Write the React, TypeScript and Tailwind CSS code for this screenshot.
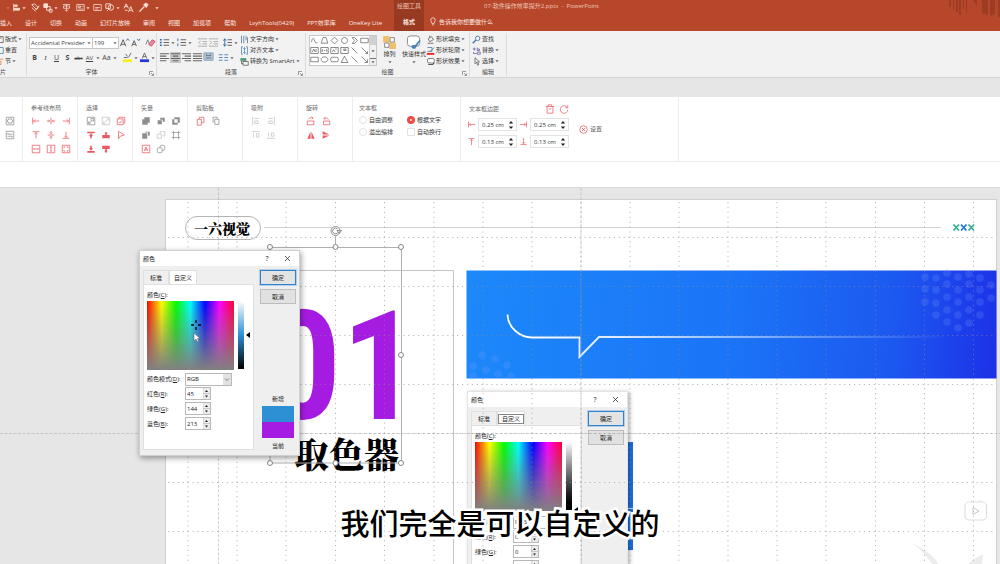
import React from "react";

type Kids = { children?: React.ReactNode };

function Ico({ label, children, size = "w-[11px] h-[11px]", tone = "text-[#666]" }: Kids & { label: string; size?: string; tone?: string }) {
  return (
    <button type="button" aria-label={label} className={`flex shrink-0 items-center justify-center ${size} ${tone}`}>
      <svg viewBox="0 0 12 12" className="h-full w-full" fill="none" stroke="currentColor" strokeWidth="1">
        {children}
      </svg>
    </button>
  );
}

function Caret({ tone = "text-[#666]" }: { tone?: string }) {
  return (
    <svg viewBox="0 0 6 6" className={`h-[6px] w-[6px] shrink-0 ${tone}`} aria-hidden="true">
      <path d="M1.4 2.2h3.2L3 4.2z" fill="currentColor" />
    </svg>
  );
}

function Group({ label, width, launcher, children }: Kids & { label: string; width: string; launcher?: boolean }) {
  return (
    <section className={`relative flex shrink-0 flex-col border-r border-[#dcdcdc] ${width}`}>
      <div className="flex h-[35px] items-center">{children}</div>
      <div className="flex h-[9px] items-center justify-center text-[#444]">{label}</div>
      {launcher && (
        <button type="button" aria-label={`${label}设置`} className="absolute right-[2px] bottom-0 h-[5px] w-[5px]">
          <svg viewBox="0 0 5 5" className="h-full w-full" fill="none" stroke="#777" strokeWidth=".7">
            <path d="M.5 4V.5H4M2 2l2.500 2.500M4.500 2.500v2h-2" />
          </svg>
        </button>
      )}
    </section>
  );
}

function Command({ text, caret = true, children }: Kids & { text: string; caret?: boolean }) {
  return (
    <button type="button" className="flex h-[11px] items-center whitespace-nowrap">
      <svg viewBox="0 0 12 12" className="mr-[1px] h-[9px] w-[9px] shrink-0" fill="none" stroke="#555" strokeWidth="1">
        {children}
      </svg>
      {text}
      {caret && <Caret />}
    </button>
  );
}

function Letter({ label, children, look = "" }: Kids & { label: string; look?: string }) {
  return (
    <button type="button" aria-label={label} className={`flex h-[12px] w-[11px] shrink-0 items-center justify-center text-[7px] text-[#444] ${look}`}>
      {children}
    </button>
  );
}

const tabs = ["插入", "设计", "切换", "动画", "幻灯片放映", "审阅", "视图", "加载项", "帮助", "LvyhTools(0429)", "PPT效率库", "OneKey Lite"];

function Header() {
  return (
    <header className="flex h-[31px] shrink-0 overflow-hidden bg-[#b7472a] text-[#fbe9e3]">
      <div className="flex w-[394px] shrink-0 flex-col">
        <div className="flex h-[15px] items-center text-[#f8ded5]">
          <span className="w-[12px] pl-[5px]"><Caret tone="text-[#cf7b66]" /></span>
          <Ico label="对齐" size="w-[9px] h-[9px]" tone="text-[#f8ded5]"><path d="M2 1v10M3 2.500h4v2H3zM3 7h7v2.500H3z" fill="currentColor" /></Ico>
          <Caret tone="text-[#f8ded5]" />
          <span className="w-[3px]" />
          <Ico label="格式刷" tone="text-[#f8ded5]"><path d="M2 3l3-1 4 4-2 2zM6 9l4-5M2 6l4 4" /></Ico>
          <span className="w-[1px]" />
          <Ico label="排列" tone="text-[#f8ded5]"><path d="M2 2h4v4H2z" fill="currentColor" /><path d="M5 5h4v4H5zM8 8h3v3H8z" /></Ico>
          <Caret tone="text-[#f8ded5]" />
          <span className="w-[3px]" />
          <Ico label="分布" size="w-[9px] h-[9px]" tone="text-[#f8ded5]"><path d="M1 2h10M2 4h8v3H2zM6 2v9M4 9l2 2 2-2" /></Ico>
          <span className="w-[5px]" />
          <Ico label="版式" size="w-[9px] h-[9px]" tone="text-[#f8ded5]"><path d="M1 2h10v8H1zM3 4h3v2H3zM7.500 4.500H10M3 8h7" /></Ico>
          <Caret tone="text-[#f8ded5]" />
          <span className="w-[2px]" />
          <Ico label="文本框" size="w-[9px] h-[9px]" tone="text-[#f8ded5]"><path d="M1 2h10v8H1zM3 6h6M3 8h4" /></Ico>
          <span className="w-[2px]" />
          <Ico label="形状" tone="text-[#f8ded5]"><path d="M2 2h5v5H2z" /><circle cx="7.500" cy="6" r="3" /><path d="M3 10l2-2" /></Ico>
          <Caret tone="text-[#f8ded5]" />
          <span className="w-[2px]" />
          <Ico label="文字" tone="text-[#f8ded5]"><path d="M1 7l2.500-5L6 7M2 5h3M6 11l2.500-6L11 11M7 9h3M2 9h3" /></Ico>
          <span className="w-[4px]" />
          <Ico label="取色器" tone="text-[#f8ded5]"><path d="M1.500 10.500L7 5" strokeWidth="1.500" /><path d="M6 3l3 3 2-3-2-2z" fill="currentColor" /></Ico>
          <span className="w-[5px]" />
          <Caret tone="text-[#f8ded5]" />
        </div>
        <nav className="flex h-[16px] items-center gap-[13px] whitespace-nowrap">
          {tabs.map((t) => <a key={t} href="#tab">{t}</a>)}
        </nav>
      </div>
      <div className="flex w-[30px] shrink-0 flex-col items-center bg-[#983a22]">
        <span className="flex h-[13px] items-center whitespace-nowrap text-[#f0c4b6]">绘图工具</span>
        <a href="#format" className="flex h-[20px] items-center font-bold">格式</a>
      </div>
      <div className="flex flex-1 flex-col">
        <div className="flex h-[13px] items-center pl-[60px] whitespace-pre text-[#efc6ba]">07-软件操作效率提升2.pptx  -  PowerPoint</div>
        <a href="#help" className="flex h-[20px] items-center pl-[5px]">
          <svg viewBox="0 0 10 12" className="mr-[2px] h-[9px] w-[8px]" fill="none" stroke="currentColor">
            <path d="M3.500 8.500C3.500 7 2 6 2 4a3 3 0 0 1 6 0c0 2-1.500 3-1.500 4.500zM3.500 10.500h3" />
          </svg>
          告诉我你想要做什么
        </a>
      </div>
      <svg viewBox="0 0 52 18" className="h-[18px] w-[52px] shrink-0" aria-hidden="true" fill="#9d3b23">
        <path d="M1 0h2v7H1zM5 0h1v10H5zM8 0h2v12H8zM11 0h2v15h-2zM15 0h1v9h-1zM18 0h1v13h-1zM25 0h4v6zM34 0h6v15l-6-2zM42 0h5v14l-5 2zM50 0h2v17h-2z" />
      </svg>
    </header>
  );
}

function Lines({ d }: { d: string }) {
  return <path d={d} strokeWidth="1.100" />;
}

const shapes = [
  "M2 8C3 2 5 2 6 6s3 4 4 2", "M1.500 9.500L4 2h4l2.500 7.500z", "M6 1.500L10.500 6 6 10.500 1.500 6z", "M6 2a4 4 0 1 0 .1 0z", "M3 2h3l4 4-4 4H3l3-4z", "M1 3h10v6H1z",
  "M1 2h10v8H1zM3 8l2-4 2 4M8 4v4", "M1 2h10v8H1zM3 4v4M9 4v4M5 6h2", "M1 2h10v8H1zM3 8l2-3 2 3M7 4h2", "M1 2h10v8H1zM5 4h3v2H5z", "M2 2l8 8", "M2 2l8 8M10 7v3H7",
  "M1 3h10v6H1z", "M6 2.500c6 0 6 7 0 7s-6-7 0-7z", "M3 3h6a2 2 0 0 1 2 2v2a2 2 0 0 1-2 2H3a2 2 0 0 1-2-2V5a2 2 0 0 1 2-2z", "M6 1.500L10.500 10h-9z", "M2 2l8 8", "M2 2l8 8M10 6v4H6",
];

function Ribbon() {
  return (
    <div className="flex h-[47px] shrink-0 overflow-hidden border-b border-[#d5d5d5] bg-[#f2f2f2] pt-[2px] pb-[1px] whitespace-nowrap text-[#333]">
      <section className="flex w-[27px] shrink-0 flex-col border-r border-[#dcdcdc]">
        <div className="-ml-[5px] flex h-[35px] flex-col justify-center">
          <Command text="版式"><path d="M1 2h10v8H1zM3 4h6M3 6h3v3" /></Command>
          <Command text="重置" caret={false}><path d="M2 2h9v8H2zM2 6h4M4 4L2 6l2 2" stroke="#3a78b5" /></Command>
          <Command text="节"><path d="M2 3h9M2 6h6v4H2z" stroke="#e07b39" /></Command>
        </div>
        <div className="flex h-[9px] items-center text-[#444]">片</div>
      </section>

      <Group label="字体" width="w-[130px]" launcher>
        <div className="flex flex-col gap-[3px] pl-[2px]">
          <div className="flex items-center">
            <div className="relative flex">
              <select aria-label="字体" className="h-[12px] w-[64px] appearance-none border border-[#c6c6c6] bg-white pl-[1px] text-[#444]">
                <option>Accidental Presider</option>
              </select>
              <span className="pointer-events-none absolute top-[3px] right-[1px] bg-white"><Caret /></span>
            </div>
            <div className="relative -ml-px flex">
              <select aria-label="字号" className="h-[12px] w-[27px] appearance-none border border-[#c6c6c6] bg-white pl-[1px] text-[#444]">
                <option>199</option>
              </select>
              <span className="pointer-events-none absolute top-[3px] right-[1px] bg-white"><Caret /></span>
            </div>
            <Ico label="增大字号"><path d="M1.500 10L4.500 3l3 7M2.500 8h4" stroke="#555" /><path d="M8 4l1.500-2L11 4" stroke="#2b67a8" /></Ico>
            <Ico label="减小字号"><path d="M2 10l2.500-6L7 10M3 8h3" stroke="#555" /><path d="M8 2l1.500 2L11 2" stroke="#2b67a8" /></Ico>
            <span className="w-[4px]" />
            <Ico label="清除格式" tone="text-[#c9496b]"><path d="M1 8l2-5 2 5" stroke="#777" /><path d="M4 8l4-5 3 2-4 5z" fill="#e58aa3" /></Ico>
          </div>
          <div className="flex items-center">
            <Letter label="加粗" look="font-bold">B</Letter>
            <Letter label="倾斜" look="italic font-serif">I</Letter>
            <Letter label="下划线" look="underline">U</Letter>
            <Letter label="阴影" look="font-bold">S</Letter>
            <Letter label="删除线" look="line-through !text-[5px]">abc</Letter>
            <Letter label="字符间距" look="!text-[6px] underline">AV</Letter>
            <Caret />
            <Letter label="更改大小写">Aa</Letter>
            <Caret />
            <span className="w-[4px]" />
            <Ico label="突出显示"><path d="M2 6h4M7 6l3-5M4 2l2 3" /><path d="M1 9.500h10" stroke="#f7ef1d" strokeWidth="3" /></Ico>
            <Caret />
            <Ico label="字体颜色"><path d="M3.500 7L6 1l2.500 6M4.500 5h3" /><path d="M1 9.500h10" stroke="#2338d6" strokeWidth="3" /></Ico>
            <Caret />
          </div>
        </div>
      </Group>

      <Group label="段落" width="w-[149px]" launcher>
        <div className="flex w-[82px] flex-col gap-[4px] pl-[2px]">
          <div className="flex items-center">
            <Ico label="项目符号"><path d="M1 3h2M1 6h2M1 9h2" stroke="#2b67a8" strokeWidth="1.500" /><Lines d="M5 3h6M5 6h6M5 9h6" /></Ico>
            <Caret />
            <Ico label="编号"><path d="M2 1.500v3M2 7v3" stroke="#2b67a8" /><Lines d="M5 3h6M5 6h6M5 9h6" /></Ico>
            <Caret />
            <span className="w-[5px]" />
            <Ico label="减少缩进" tone="text-[#aaa]"><path d="M1 2h10M6 5h5M6 7.500h5M1 10h10M4 4L2 6l2 2" /></Ico>
            <Ico label="增加缩进" tone="text-[#aaa]"><path d="M1 2h10M6 5h5M6 7.500h5M1 10h10M2 4l2 2-2 2" /></Ico>
            <span className="w-[4px]" />
            <Ico label="行距"><path d="M3 2v8M1.500 4L3 2l1.500 2M1.500 8L3 10l1.500-2" stroke="#2b67a8" /><Lines d="M6 3h5M6 6h5M6 9h5" /></Ico>
            <Caret />
          </div>
          <div className="flex items-center">
            <Ico label="左对齐"><Lines d="M1 2h10M1 4.500h7M1 7h10M1 9.500h7" /></Ico>
            <span className="flex bg-[#c9c9c9]"><Ico label="居中"><Lines d="M1 2h10M3 4.500h6M1 7h10M3 9.500h6" /></Ico></span>
            <Ico label="右对齐"><Lines d="M1 2h10M4 4.500h7M1 7h10M4 9.500h7" /></Ico>
            <Ico label="两端对齐"><Lines d="M1 2h10M1 4.500h10M1 7h10M1 9.500h10" /></Ico>
            <Ico label="分散对齐"><path d="M1 1h10v8H1z" fill="#b5cbe0" stroke="#7f9fbd" /><path d="M3 4h6M3 6.500h6M4 2v1M8 2v1" /></Ico>
            <span className="w-[4px]" />
            <Ico label="分栏"><path d="M1 3h4M1 6h4M1 9h4M7 3h4M7 6h4M7 9h4" stroke="#4b83b8" /></Ico>
            <Caret />
          </div>
        </div>
        <div className="flex flex-col pl-[1px]">
          <Command text="文字方向"><path d="M2 1v10M5 1v10M8 7V1M10 3v8" stroke="#4b6f91" /></Command>
          <Command text="对齐文本"><path d="M4 1H2v10h2M8 1h2v10H8M6 2v8M4.500 4L6 2l1.500 2M4.500 8L6 10l1.500-2" stroke="#4b83b8" /></Command>
          <Command text="转换为 SmartArt"><path d="M1 2h7v3H1z" fill="#4a9b78" stroke="#4a9b78" /><path d="M4 6h7v5H4zM2 5v4h2" /></Command>
        </div>
      </Group>

      <Group label="绘图" width="w-[164px]" launcher>
        <div className="ml-[3px] flex h-[31px] shrink-0 border border-[#c8c8c8] bg-white">
          <div className="grid w-[59px] grid-cols-6 place-items-center">
            {shapes.map((d, i) => <Ico key={i} label={`形状 ${i + 1}`} size="w-[9px] h-[9px]" tone="text-[#666]"><path d={d} /></Ico>)}
          </div>
          <div className="flex w-[7px] flex-col items-center justify-between border-l border-[#d0d0d0] bg-[#f0f0f0] text-[#333]">
            <span className="h-[9px] w-full bg-[#d0d0d0]" /><Caret /><span className="border-t border-[#777]"><Caret /></span>
          </div>
        </div>
        <button type="button" className="flex w-[25px] shrink-0 flex-col items-center">
          <svg viewBox="0 0 14 14" className="h-[15px] w-[15px]"><path d="M1 1h6v6H1zM7 7h6v6H7z" fill="#f0bf6a" /><path d="M7.500 2.500h4v4h-4zM2.500 7.500h4v4h-4z" fill="#fff" stroke="#777" strokeWidth=".8" /></svg>
          <span className="h-[9px]">排列</span><Caret />
        </button>
        <button type="button" className="flex w-[24px] shrink-0 flex-col items-center">
          <svg viewBox="0 0 16 16" className="h-[15px] w-[16px]"><rect x="1" y="1" width="13" height="11" rx="3" fill="#fff" stroke="#888" /><path d="M6 14c-2-2 1-4 3-3l5-6 1 1-5 7c0 2-2 2-4 1z" fill="#4681bd" /></svg>
          <span className="h-[9px]">快速样式</span><Caret />
        </button>
        <div className="flex flex-col">
          <Command text="形状填充"><path d="M3 5l4-3 3 4-5 3zM2 11h8M5 1v3" /></Command>
          <Command text="形状轮廓"><path d="M2 2h6v5H2M5 8l6-6" stroke="#4b6f91" /><path d="M1 10.500h10" stroke="#e22" strokeWidth="2.500" /></Command>
          <Command text="形状效果"><path d="M4 2h5a2 2 0 0 1 2 2v2a2 2 0 0 1-2 2H4a2 2 0 0 1-2-2V4a2 2 0 0 1 2-2z" fill="#fff" /><path d="M3 10h6l2-2.500" strokeWidth="1.500" /></Command>
        </div>
      </Group>

      <Group label="编辑" width="w-[37px]">
        <div className="flex flex-col pl-[2px]">
          <Command text="查找" caret={false}><circle cx="7.500" cy="4.500" r="3" stroke="#2b67a8" /><path d="M5 7l-4 4" stroke="#2b67a8" strokeWidth="1.500" /></Command>
          <Command text="替换"><path d="M1 4h4M3 2v4M7 2v4h3V4H7M2 8v2h4M7 8h4v3H7z" stroke="#6a5a9c" /></Command>
          <Command text="选择"><path d="M4 1v8l2-2 1.500 4L9 10 7.500 6.500H10z" /></Command>
        </div>
      </Group>
    </div>
  );
}

type Glyph = { d: string; tone?: "red" | "gray" | "light"; fill?: boolean };

const guides: Glyph[] = [
  { d: "M2 2v8M3 6h7M5 4L3 6l2 2" }, { d: "M6 2v8M1 6h3M11 6H8M3 4.500L4.500 6 3 7.500M9 4.500L7.500 6 9 7.500" }, { d: "M10 2v8M2 6h7M7 4l2 2-2 2" },
  { d: "M2 2h8M6 3v7M4 5l2-2 2 2" }, { d: "M2 6h8M6 1v3M6 11V8M4.500 3L6 4.500 7.500 3M4.500 9L6 7.500 7.500 9" }, { d: "M2 10h8M6 2v7M4 7l2 2 2-2" },
  { d: "M1.500 1.500h9v9h-9zM3 6h6M4 5L3 6l1 1M8 5l1 1-1 1" }, { d: "M1.500 1.500h9v9h-9zM6 3v6M5 4l1-1 1 1M5 8l1 1 1-1" }, { d: "M1.500 1.500h9v9h-9zM3.500 5V3.500H5M7 3.500h1.500V5M8.500 7v1.500H7M5 8.500H3.500V7" },
];
const selects: Glyph[] = [
  { d: "M1.500 1.500h9v9h-9zM6 3h3v3H6zM3 7h2v2H3z", tone: "gray" }, { d: "M1.500 1.500h9v9h-9zM4 8l4-4M7 3.500h2v2M3 7v2h2", tone: "light" }, { d: "M1.500 3.500h7v7h-7zM3.500 3V1.500h7v7H9M3 7l1.500 1.500L7 5.500" },
  { d: "M1.500 2h9v2h-9zM5 5h2v5H5zM3.500 7L6 4l2.500 3z", fill: true }, { d: "M1.500 6h9v4h-9zM5 3h2v3H5zM4 4l2-2 2 2z", fill: true }, { d: "M3 1.500l7 4.500-5 1.500L3 10.500z" },
  { d: "M1.500 8.500h9v2h-9zM5 2h2v4H5zM3.500 5h5L6 8z", fill: true }, { d: "M1.500 2h9v4h-9zM5 6h2v3H5zM4 8h4l-2 3z", fill: true },
];
const vectors: Glyph[] = [
  { d: "M4 1.500h6.500V8H8v2.500H1.500V4H4z", tone: "gray", fill: true }, { d: "M5 2h5.500v5H8V4.500H5zM2 5h5v5H2z", tone: "gray", fill: true }, { d: "M4 1.500h6.500V8H8V4H4zM1.500 4H4v4h4v2.500H1.500z", tone: "gray", fill: true },
  { d: "M1.500 4h6v6.500h-6zM8.500 2h2v5h-2zM5 2h4v1H5z", tone: "gray", fill: true }, { d: "M1.500 5h5v5h-5zM5 4.500V2h5.500v5H8", tone: "light" }, { d: "M3 1v10M9 1v10M1 3h10M1 9h10", tone: "gray" },
  { d: "M1.500 1.500h9v9h-9zM4 8.500L6 3.500l2 5M4.500 7h3" }, { d: "M6.500 1.500h2a2 2 0 0 1 2 2v2a2 2 0 0 1-2 2h-1M3.500 4.500h2a2 2 0 0 1 2 2v2a2 2 0 0 1-2 2h-2a2 2 0 0 1-2-2v-2a2 2 0 0 1 2-2zM5 4.500V3a1.500 1.500 0 0 1 1.500-1.500", tone: "gray" },
];
const clips: Glyph[] = [{ d: "M1.500 4h5v7h-5zM4 3.500V1.500h5.500V8H7" }, { d: "M4.500 4h5v6h-5zM2.500 8V1.500h5v2", tone: "gray" }];
const snaps: Glyph[] = [
  { d: "M2 1v10M4 3h5M4.500 6h4v3h-4z", tone: "light" }, { d: "M10 1v10M3 3h5M3.500 6h4v3h-4z", tone: "light" },
  { d: "M1 2h10M3 4v5M6.500 4.500h3v4h-3z", tone: "light" }, { d: "M1 10h10M3 3v5M6.500 3.500h3v4h-3z", tone: "light" },
];
const turns: Glyph[] = [
  { d: "M1.500 6h8v4.500h-8zM3 4c1-2 3-2.500 5-1.500M7 .8l1.500 1.700L7 4" }, { d: "M3 6h7.500v4.500H3zM9 4.500C8 2.500 6 2 4 3M5 1L3.500 3 5 4.500" },
  { d: "M5.500 2v8.500h-4zM6.500 2v8.500h4z", fill: true }, { d: "M2 1.500L10 5.500H2zM2 6.500h8L2 10.500z", fill: true },
];

function Tool({ name, g }: { name: string; g: Glyph }) {
  const tone = g.tone === "gray" ? "text-[#8e8e8e]" : g.tone === "light" ? "text-[#c2c2c2]" : "text-[#ea5a61]";
  return (
    <Ico label={name} tone={tone} size="w-[10px] h-[10px]">
      {g.fill ? <path d={g.d} fill="currentColor" stroke="none" /> : <path d={g.d} strokeWidth=".9" />}
    </Ico>
  );
}

function Panel({ title, items, cols = "grid-cols-[repeat(3,10px)]" }: { title: string; items: Glyph[]; cols?: string }) {
  return (
    <section className="w-[55px] shrink-0 border-r border-[#ededed] pt-[7px] pl-[8px]">
      <h2 className="h-[10px] text-[#6b6b6b]">{title}</h2>
      <div className={`mt-[2px] grid gap-x-[5px] gap-y-[4px] ${cols}`}>
        {items.map((g, i) => <Tool key={i} name={`${title} ${i + 1}`} g={g} />)}
      </div>
    </section>
  );
}

function Measure({ label, value, glyph }: { label: string; value: string; glyph: string }) {
  return (
    <label className="flex items-center gap-[2px]">
      <svg viewBox="0 0 12 12" className="h-[9px] w-[9px]" fill="none" stroke="#ea6a70"><path d={glyph} /></svg>
      <span className="flex h-[13px] w-[39px] items-center border border-[#e4e4e4] bg-white">
        <input aria-label={label} defaultValue={value} className="w-[29px] bg-transparent pl-[3px] text-[#333] outline-none" />
        <svg viewBox="0 0 6 10" className="h-[10px] w-[6px]" aria-hidden="true"><path d="M.8 3.500L3 1l2.200 2.500zM.8 6.500L3 9l2.200-2.500z" fill="#222" /></svg>
      </span>
    </label>
  );
}

function Choice({ text, kind, on }: { text: string; kind: "radio" | "checkbox"; on?: boolean }) {
  const shape = kind === "radio" ? "rounded-full" : "rounded-[1px]";
  const state = on ? "border-[3px] border-[#ee4b43]" : "border border-[#e2e2e2]";
  return (
    <label className="flex h-[12px] items-center gap-[2px]">
      <input type={kind} name={kind === "radio" ? "fit" : "wrap"} defaultChecked={on} className={`h-[8px] w-[8px] shrink-0 appearance-none bg-white ${shape} ${state}`} />
      {text}
    </label>
  );
}

function PluginBar() {
  return (
    <div className="mt-[19px] flex h-[91px] shrink-0 flex-col overflow-hidden border-b border-[#d8d8d8] bg-white whitespace-nowrap">
      <div className="flex h-[65px] border-b border-[#ececec]">
        <section className="flex w-[23px] shrink-0 flex-col gap-[4px] border-r border-[#ededed] pt-[19px] pl-[5px]">
          <Tool name="组合" g={{ d: "M1.500 1.500h9v9h-9zM4 3.500h4v1l1 .5v2l-1 .5v1H4v-1l-1-.5V5l1-.5z", tone: "gray" }} />
          <Tool name="交换" g={{ d: "M1.500 1.500h9v9h-9zM3 5h6M4 3.500L3 5M3 7.500h6M9 7.500L8 9", tone: "gray" }} />
        </section>
        <Panel title="参考线布局" items={guides} />
        <Panel title="选择" items={selects} />
        <Panel title="矢量" items={vectors} />
        <Panel title="剪贴板" items={clips} />
        <Panel title="吸附" items={snaps} cols="grid-cols-[repeat(2,10px)]" />
        <Panel title="旋转" items={turns} cols="grid-cols-[repeat(2,10px)]" />
        <section className="w-[108px] shrink-0 border-r border-[#ededed] pt-[7px] pl-[6px] text-[#333]">
          <h2 className="h-[10px] text-[#6b6b6b]">文本框</h2>
          <div className="grid grid-cols-[48px_48px]">
            <Choice kind="radio" text="自由调整" />
            <Choice kind="radio" text="根据文字" on />
            <Choice kind="radio" text="溢出缩排" />
            <Choice kind="checkbox" text="自动换行" />
          </div>
        </section>
        <section className="flex w-[218px] shrink-0 gap-[10px] border-r border-[#ededed] pt-[7px] pl-[6px]">
          <div className="flex flex-col gap-[4px]">
            <div className="flex h-[10px] items-center pl-[2px] text-[#6b6b6b]">
              <h2 className="flex-1">文本框边距</h2>
              <Tool name="删除" g={{ d: "M1 3h10M2.500 3v8h7V3M4 3V1h4v2M4.500 6h3" }} />
              <span className="w-[4px]" />
              <Tool name="重置" g={{ d: "M10 4.500A4.500 4.500 0 1 0 10.500 7M10.500 1.500v3h-3" }} />
            </div>
            <div className="grid grid-cols-[50px_50px] gap-x-[2px] gap-y-[4px]">
              <Measure label="左边距" value="0.25 cm" glyph="M2 2v8M3 6h8M5 4L3 6l2 2" />
              <Measure label="右边距" value="0.25 cm" glyph="M10 2v8M1 6h8M7 4l2 2-2 2" />
              <Measure label="上边距" value="0.13 cm" glyph="M2 2h8M6 3v8M4 5l2-2 2 2" />
              <Measure label="下边距" value="0.13 cm" glyph="M2 10h8M6 1v8M4 7l2 2 2-2" />
            </div>
          </div>
          <button type="button" className="flex h-[50px] items-center gap-[2px] text-[#555]">
            <svg viewBox="0 0 12 12" className="h-[9px] w-[9px]" fill="none" stroke="#ea5a61"><circle cx="6" cy="6" r="5" /><path d="M4 4l4 4M8 4L4 8" /></svg>
            设置
          </button>
        </section>
      </div>
    </div>
  );
}

function Spin({ text, hot, value }: { text: string; hot: string; value: string }) {
  return (
    <label className="flex h-[15px] items-center">
      <span className="w-[38px]">{text}(<u>{hot}</u>):</span>
      <span className="flex h-[13px] w-[26px] border border-[#b9b9b9] bg-white">
        <input defaultValue={value} className="w-[17px] bg-transparent pl-[1px] outline-none" />
        <svg viewBox="0 0 7 11" className="h-[11px] w-[7px] bg-[#ececec]" aria-hidden="true">
          <path d="M0 0v11M0 5.500h7" stroke="#bbb" fill="none" strokeWidth=".7" /><path d="M2 4l1.500-2L5 4zM2 7.500h3L3.500 9.500z" fill="#222" />
        </svg>
      </span>
    </label>
  );
}

type DialogProps = { name: string; place: string; rgb: string[]; lum: string; tabLook: string; arrow: string; picked?: boolean };

function ColorDialog({ name, place, rgb, lum, tabLook, arrow, picked }: DialogProps) {
  return (
    <section role="dialog" aria-label={name} className={`absolute flex h-[206px] w-[161px] flex-col border bg-[#efefef] text-[#222] ${place}`}>
      <div className="flex h-[15px] items-center bg-white pl-[3px]">
        <span className="flex-1">颜色</span>
        <button type="button" aria-label="帮助" className="w-[10px] text-[7px]">?</button>
        <button type="button" aria-label="关闭" className="mr-[8px] ml-[12px] h-[7px] w-[7px]">
          <svg viewBox="0 0 7 7" className="h-full w-full" stroke="#333" strokeWidth=".8"><path d="M1 1l5 5M6 1L1 6" /></svg>
        </button>
      </div>
      <div className="flex flex-1 gap-[6px] pt-[4px] pr-[3px] pb-[5px] pl-[3px]">
        <div className="flex w-[111px] flex-col">
          <div className="flex h-[14px]">
            <button type="button" className="w-[26px] border border-b-0 border-[#e0e0e0]">标准</button>
            <button type="button" className="w-[28px] border border-b-0 border-[#dedede] bg-white p-[1px]"><span className={`block ${tabLook}`}>自定义</span></button>
          </div>
          <div className="flex-1 border border-[#dfdfdf] bg-white pl-[3px] whitespace-nowrap">
            <div className="flex h-[16px] items-center pt-[3px]">颜色(<u>C</u>):</div>
            <div className="flex gap-[4px]">
              <div className="relative h-[69px] w-[87px] bg-[linear-gradient(to_bottom,transparent,#808080),linear-gradient(to_right,#f00,#ff0,#0f0,#0ff,#00f,#f0f,#f03)]">
                {picked && (
                  <svg viewBox="0 0 12 24" className="absolute top-[18px] left-[43px] h-[24px] w-[12px]" aria-hidden="true">
                    <path d="M6 1v3M6 8v3M1 6h3M8 6h3" stroke="#000" strokeWidth="1.300" />
                    <path d="M4 14v8l2-2 1.500 3 1.200-.6L7.500 19.500H10z" fill="#fff" stroke="#555" strokeWidth=".5" />
                  </svg>
                )}
              </div>
              <div className={`h-[68px] w-[6px] ${lum}`} />
              <svg viewBox="0 0 5 6" className={`-ml-[3px] h-[6px] w-[5px] ${arrow}`} aria-hidden="true"><path d="M5 0v6L1 3z" fill="#000" /></svg>
            </div>
            <label className="mt-[2px] flex h-[14px] items-center">
              <span className="w-[38px]">颜色模式(<u>D</u>):</span>
              <span className="relative flex">
                <select className="h-[13px] w-[47px] appearance-none border border-[#b9b9b9] bg-white pl-[1px]"><option>RGB</option></select>
                <svg viewBox="0 0 8 11" className="pointer-events-none absolute top-[1px] right-[1px] h-[11px] w-[8px] bg-[#e2e2e2]" fill="none" stroke="#666" strokeWidth=".8"><path d="M2 4.500l2 2 2-2" /></svg>
              </span>
            </label>
            <Spin text="红色" hot="R" value={rgb[0]} />
            <Spin text="绿色" hot="G" value={rgb[1]} />
            <Spin text="蓝色" hot="B" value={rgb[2]} />
          </div>
        </div>
        <div className="flex flex-1 flex-col items-center">
          <button type="button" className="h-[15px] w-full border border-[#2f83cc] bg-[#e3e3e3] outline outline-[#8bb8e0]/60">确定</button>
          <button type="button" className="mt-[4px] h-[15px] w-full border border-[#bdbdbd] bg-[#e1e1e1]">取消</button>
          {picked && (
            <>
              <span className="mt-auto">新增</span>
              <div className="mt-[3px] h-[16px] w-[32px] bg-[#2d90d5]" />
              <div className="mb-[4px] h-[16px] w-[32px] bg-[#a61be2]" />
              <span>当前</span>
            </>
          )}
        </div>
      </div>
    </section>
  );
}

const gridX = [188, 237, 286, 335.5, 384.500, 434, 483, 532, 581, 630, 679, 728, 777, 826, 875.500, 924.500, 973.500];
const gridY = [237.500, 286.500, 335.500, 384.500, 433.500, 482.500, 531.500];
const handles = [[270, 247], [335.500, 247], [401, 247], [401, 355], [270, 463], [335.500, 463], [401, 463]];
const halftone = [
  [925, 277], [947, 273], [936, 278], [925, 289], [936, 290], [947, 284], [936, 303], [925, 302], [958, 277], [969, 274], [958, 290], [969, 284], [947, 297],
  [958, 302], [969, 297], [980, 278], [980, 290], [980, 302], [947, 310], [936, 315], [969, 310], [958, 315], [980, 315], [991, 285], [991, 298], [958, 328], [947, 322], [969, 323],
  [473, 366], [482, 355], [486, 370], [495, 359], [498, 374], [507, 365], [473, 376], [511, 376],
];

function Canvas() {
  return (
    <main className="relative min-h-0 flex-1 overflow-hidden">
      <div className="absolute top-[11px] right-[3px] -bottom-[2px] left-[165px] border border-[#d0d0d0] bg-white" />
      <svg viewBox="0 188 1000 376" className="absolute top-0 left-0 h-[376px] w-[1000px]" aria-hidden="true">
        <defs>
          <linearGradient id="banner" gradientUnits="userSpaceOnUse" x1="470" y1="300" x2="1000" y2="350">
            <stop offset="0" stopColor="#1c88fa" /><stop offset=".5" stopColor="#1b74f7" /><stop offset=".8" stopColor="#1c58f0" /><stop offset="1" stopColor="#1d30e8" />
          </linearGradient>
          <linearGradient id="fade" gradientUnits="userSpaceOnUse" x1="507" y1="0" x2="950" y2="0">
            <stop offset="0" stopColor="#fff" /><stop offset=".25" stopColor="#dceaff" /><stop offset="1" stopColor="#bcd4ff" stopOpacity="0" />
          </linearGradient>
        </defs>
        <path d="M264 227.500H941" stroke="#d2d2d2" />
        <path d="M300 270.500H453.500V564" stroke="#c4c4c4" fill="none" />
        <rect x="466.500" y="270.500" width="530" height="108" fill="url(#banner)" />
        {halftone.map(([x, y], i) => <circle key={i} cx={x} cy={y} r="3.800" fill="#7ea0ff" opacity=".2" />)}
        <path d="M507.500 314.500C508 328 520 337.300 532 337.500H579.500V357L599 337H945" fill="none" stroke="url(#fade)" strokeWidth="1.800" />
        <path d="M953.500 224.500l5.500 6M959 224.500l-5.500 6M968.500 224.500l5.500 6M974 224.500l-5.500 6" stroke="#33b08e" strokeWidth="1.800" />
        <path d="M961 224.500l5.500 6M966.500 224.500l-5.500 6" stroke="#2478d8" strokeWidth="1.800" />
        <path d="M912 543c10 5 20 11 27 21h-7c-5-8-11-14-20-21zM983 554c-6 3-11 6-15 10h14z" fill="#ececec" />
        <rect x="628" y="442" width="5" height="108" fill="#1b6fe0" />
        <path d="M628 508.500h5" stroke="#cfe0f7" />
      </svg>

      <div className="absolute top-[28px] left-[185px] flex h-[24px] w-[76px] items-center rounded-full border border-[#b5b5b5] bg-white pl-[8px] font-['Noto_Serif_CJK_SC','Noto_Sans_CJK_SC',serif] text-[14px] leading-none font-black whitespace-nowrap text-black">一六视觉</div>
      <div className="absolute top-[102px] left-[264px] font-['Roboto_Condensed','Roboto',sans-serif] text-[153px] leading-[153px] font-bold whitespace-nowrap text-[#a61be2]">01</div>
      <div className="absolute top-[247px] left-[294px] font-['Noto_Serif_CJK_SC','Noto_Sans_CJK_SC',serif] text-[35px] leading-[36px] font-black whitespace-nowrap text-black">取色器</div>

      <ColorDialog
        name="颜色 副本" place="top-[203px] left-[467px] border-[#e4e4e4] shadow-[2px_1px_4px_rgba(0,0,0,0.3)]" rgb={["0", "0", "0"]}
        lum="bg-linear-to-b from-white to-black" tabLook="outline outline-[#888]" arrow="mt-[65px]"
      />

      <svg viewBox="0 188 1000 376" className="pointer-events-none absolute top-0 left-0 h-[376px] w-[1000px]" aria-hidden="true" fill="none">
        <g stroke="#8c8c8c" strokeOpacity=".6" strokeDasharray="1.200 3.700">
          {gridX.map((x) => <path key={x} d={`M${x} 202V564`} />)}
          {gridY.map((y) => <path key={y} d={`M168 ${y}H996`} />)}
        </g>
        <g stroke="#a0a0a0" strokeOpacity=".6" strokeDasharray="3 1.500" strokeWidth=".8">
          <path d="M218.500 188V564M581 188V564M0 433.500H1000" />
        </g>
        <path d="M270 247.500H401.500V463H270zM335.500 247V236" stroke="#b0b0b0" />
        <g fill="#fff" stroke="#868686">
          {handles.map(([x, y]) => <circle key={`${x}-${y}`} cx={x} cy={y} r="2.500" />)}
        </g>
        <g stroke="#909090">
          <circle cx="335.500" cy="231" r="4.500" fill="#fff" />
          <path d="M337.500 229a2.800 2.800 0 1 0 .3 3.500M337 230.500h4.500l-2.300 3z" fill="none" />
        </g>
        <g stroke="#e0e0e0">
          <rect x="965" y="502" width="21.500" height="18" rx="4" strokeWidth="1.200" />
          <path d="M971 500l2 2M981 500l-2 2" />
          <path d="M973 507.500v7l6-3.500z" stroke="#c8c8c8" />
        </g>
      </svg>

      <ColorDialog
        name="颜色" place="top-[62px] left-[139px] border-[#d0d0d0] shadow-[1px_2px_6px_rgba(0,0,0,0.4)]" rgb={["45", "144", "213"]}
        lum="bg-[linear-gradient(to_bottom,#fff,#2d90d5_50%,#000)]" tabLook="" arrow="mt-[31px]" picked
      />

      <p className="absolute right-0 bottom-[23px] left-0 text-center text-[29px] leading-[34px] font-medium text-black [-webkit-text-stroke:5px_white] [paint-order:stroke_fill]">
        我们完全是可以自定义的
      </p>
    </main>
  );
}

export default function App() {
  return (
    <div className="flex h-screen flex-col overflow-hidden bg-[#e6e6e6] font-['Open_Sans','Noto_Sans_CJK_SC',sans-serif] text-[6px] leading-[8px]">
      <Header />
      <Ribbon />
      <PluginBar />
      <Canvas />
    </div>
  );
}
